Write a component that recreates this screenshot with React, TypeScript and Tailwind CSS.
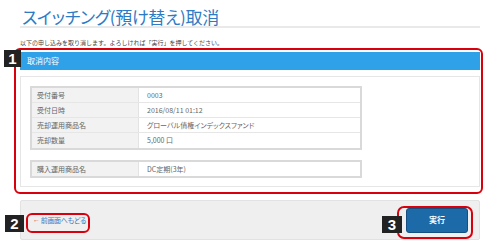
import React from "react";

const jp = { fontFamily: '"Noto Sans CJK JP", "Noto Sans", sans-serif' };

function Badge({ n, className }: { n: string; className: string }) {
  return (
    <div
      className={`absolute flex items-center justify-center bg-[#222222] text-white font-bold text-[15px] leading-none ${className}`}
      style={{ fontFamily: '"Liberation Sans", Arial, sans-serif' }}
    >
      {n}
    </div>
  );
}

function Row({ label, value, last, palt }: { label: string; value: string; last?: boolean; palt?: boolean }) {
  return (
    <div className={`flex h-[15px] ${last ? "" : "border-b border-[#e6e6e6]"}`}>
      <div className="w-[107px] bg-[#f2f2f2] border-r border-[#e3e3e3] pl-[5px] flex items-center text-[7px] text-[#666]">
        {label}
      </div>
      <div
        className={`flex-1 pl-[8px] flex items-center text-[7px] text-[#666] ${palt ? "[font-feature-settings:'palt']" : ""}`}
      >
        {value}
      </div>
    </div>
  );
}

export default function App() {
  return (
    <div className="relative w-[500px] h-[251px] bg-white overflow-hidden" style={jp}>
      <div className="mx-[20px] w-[460px] flex flex-col">
        <div className="h-[26px] pl-[2px] flex items-end pb-[1px] text-[17px] leading-none text-[#2d7bc4] [font-feature-settings:'palt'] tracking-[-0.3px]">
          スイッチング(預け替え)取消
        </div>
        <div className="h-[2px] bg-[#e9e9e9]" />
        <div className="mt-[12px] h-[6px] text-[6px] leading-[6px] text-[#444] whitespace-nowrap">
          以下の申し込みを取り消します。よろしければ「実行」を押してください。
        </div>
        <div className="mt-[6px] h-[18px] bg-[#2ea1e8] pl-[7px] flex items-center text-[8px] text-white">
          取消内容
        </div>
        <div className="mt-[6px] border border-[#e6e6e6] pt-[9px] pb-[8px] pl-[9px]">
          <div className="w-[332px] border-2 border-[#d9d9d9]">
            <Row label="受付番号" value="0003" />
            <Row label="受付日時" value="2016/08/11 01:12" />
            <Row label="売却運用商品名" value="グローバル債権インデックスファンド" palt />
            <Row label="売却数量" value="5,000 口" last />
          </div>
          <div className="mt-[10px] w-[332px] border-2 border-[#d9d9d9] flex h-[18px]">
            <div className="w-[107px] bg-[#f2f2f2] border-r border-[#e3e3e3] pl-[5px] flex items-center text-[7px] text-[#666]">
              購入運用商品名
            </div>
            <div className="flex-1 pl-[8px] flex items-center text-[7px] text-[#666]">DC定期(3年)</div>
          </div>
        </div>
        <div className="mt-[13px] h-[40px] bg-[#efefef] border border-[#e2e2e2] rounded-[2px] flex items-center justify-between pl-[12px] pr-[11px]">
          <div className="flex items-center text-[7px] [font-feature-settings:'palt'] tracking-[-0.3px]">
            <span
              className="text-[#e0463c] mr-[1px] text-[7px]"
              style={{ fontFamily: '"Liberation Sans", Arial, sans-serif' }}
            >
              ←
            </span>
            <span className="text-[#3a7cc4]">前画面へもどる</span>
          </div>
          <div className="w-[62px] h-[25px] rounded-[3px] bg-[#1d6aa8] border border-[#154f82] flex items-center justify-center text-white text-[8px] font-bold">
            実行
          </div>
        </div>
      </div>

      {/* annotations */}
      <div className="absolute left-[14px] top-[48px] w-[469px] h-[146px] border-2 border-[#d8000c] rounded-[6px] pointer-events-none" />
      <Badge n="1" className="left-[4px] top-[50px] w-[17px] h-[17px]" />
      <div className="absolute left-[26px] top-[213px] w-[64px] h-[20px] border-2 border-[#d8000c] rounded-[6px]" />
      <Badge n="2" className="left-[5px] top-[215px] w-[19px] h-[17px]" />
      <div className="absolute left-[397px] top-[206px] w-[76px] h-[33px] border-2 border-[#d8000c] rounded-[7px]" />
      <Badge n="3" className="left-[382px] top-[216px] w-[20px] h-[17px]" />
    </div>
  );
}
